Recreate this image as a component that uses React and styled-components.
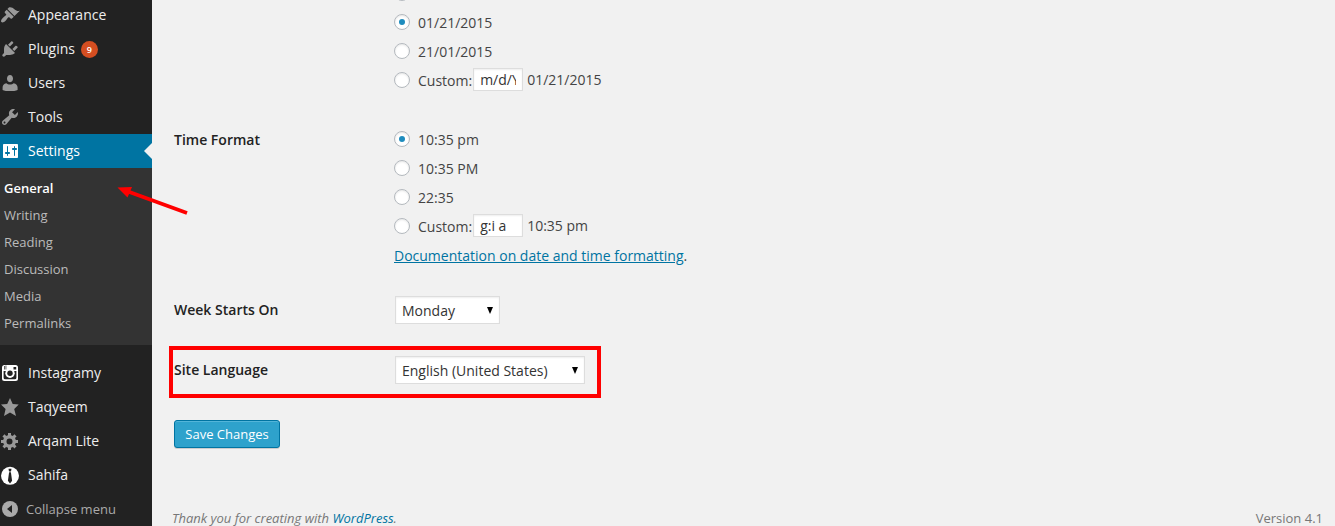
import React from "react";
import styled, { createGlobalStyle, css } from "styled-components";

const GlobalStyle = createGlobalStyle`
  *, *::before, *::after { box-sizing: border-box; }
  html, body { margin: 0; padding: 0; }
  body {
    background: #f1f1f1;
    color: #444;
    font-family: "Open Sans", "Noto Sans", sans-serif;
    font-size: 14px;
    overflow: hidden;
  }
`;

const Page = styled.div`
  position: relative;
  display: flex;
  width: 1335px;
  height: 526px;
  overflow: hidden;
`;

const Sidebar = styled.nav`
  flex: 0 0 152px;
  height: 528px;
  margin-top: -2px;
  background: #222;
`;

const MenuItem = styled.a`
  display: flex;
  align-items: center;
  height: 34px;
  color: ${(p) => (p.$current ? "#fff" : "#eee")};
  background: ${(p) => (p.$current ? "#0074a2" : "transparent")};
  line-height: 18px;
  white-space: nowrap;
  ${(p) =>
    p.$current &&
    css`
      &::after {
        content: "";
        margin-left: auto;
        border: 8px solid transparent;
        border-left-width: 0;
        border-right-color: #f1f1f1;
      }
    `}
`;

const MenuIcon = styled.svg`
  flex: none;
  width: 20px;
  height: 20px;
  margin-right: 8px;
  fill: ${(p) => p.$color || "#999"};
`;

const Badge = styled.span`
  width: 17px;
  height: 17px;
  margin-left: 6px;
  border-radius: 50%;
  background: #d54e21;
  color: #fff;
  font-size: 9px;
  font-weight: 600;
  line-height: 17px;
  text-align: center;
`;

const Submenu = styled.div`
  height: 177px;
  margin-bottom: 11px;
  padding: 7px 4px;
  background: #333;
`;

const SubItem = styled.a`
  display: block;
  height: 27px;
  color: ${(p) => (p.$current ? "#fff" : "#bbb")};
  font-size: 13px;
  font-weight: ${(p) => (p.$current ? 600 : 400)};
  line-height: 27px;
`;

const Collapse = styled(MenuItem)`
  color: #aaa;
  font-size: 13px;
  ${MenuIcon} { margin-right: 6px; }
`;

const Main = styled.main`
  display: flex;
  flex: 1;
  flex-direction: column;
  height: 526px;
`;

const Field = styled.section`
  display: grid;
  grid-template-columns: 220px 1fr;
  height: ${(p) => p.$height}px;
  padding-left: 22px;
  flex: none;
`;

const DateField = styled(Field)`
  margin-top: -21px;
`;

const Heading = styled.h2`
  margin: 0;
  padding-top: ${(p) => p.$top || 0}px;
  color: #222;
  font-size: 14px;
  font-weight: 600;
  line-height: 20px;
`;

const RadioRow = styled.label`
  display: flex;
  height: 29px;
  line-height: 20px;
  padding-top: 5px;
`;

const Radio = styled.span`
  display: flex;
  align-items: center;
  justify-content: center;
  width: 16px;
  height: 16px;
  margin: 1px 8px 0 0;
  border: 1px solid #b4b9be;
  border-radius: 50%;
  background: #fff;
  box-shadow: inset 0 1px 2px rgba(0, 0, 0, 0.1);
  &::before {
    content: "";
    width: 6px;
    height: 6px;
    border-radius: 50%;
    background: ${(p) => (p.$checked ? "#1e8cbe" : "transparent")};
  }
`;

const FormatInput = styled.input`
  width: 50px;
  height: 23px;
  margin: -3px 4px 0 1px;
  padding: 3px 6px;
  border: 1px solid #ddd;
  background: #fff;
  box-shadow: inset 0 1px 2px rgba(0, 0, 0, 0.07);
  color: #333;
  font: 14px "Open Sans", sans-serif;
  outline: none;
`;

const Example = styled.span`
  margin-top: -1px;
`;

const DocLine = styled.p`
  margin: 5px 0 0;
  line-height: 20px;
`;

const Link = styled.a`
  color: #0074a2;
  text-decoration: ${(p) => (p.$underline ? "underline" : "none")};
`;

const SelectBox = styled.div`
  display: flex;
  align-items: center;
  justify-content: space-between;
  width: ${(p) => p.$width}px;
  height: 28px;
  margin-left: 1px;
  padding: 1px 6px 0 6px;
  border: 1px solid #ddd;
  background: #fff;
  box-shadow: inset 0 1px 2px rgba(0, 0, 0, 0.07);
  color: #333;
  svg { width: 6px; height: 7px; margin-top: -1px; }
`;

const SaveButton = styled.button`
  align-self: flex-start;
  flex: none;
  width: 106px;
  height: 28px;
  margin: 4px 0 0 22px;
  padding: 0;
  border: 1px solid #0074a2;
  border-radius: 3px;
  background: #2ea2cc;
  box-shadow: inset 0 1px 0 rgba(120, 200, 230, 0.5), 0 1px 0 rgba(0, 0, 0, 0.15);
  color: #fff;
  font: 13px/26px "Open Sans", sans-serif;
`;

const Footer = styled.footer`
  display: flex;
  justify-content: space-between;
  margin-top: auto;
  padding: 0 12px 0 20px;
  height: 18px;
  color: #777;
  font-size: 13px;
  line-height: 20px;
`;

const Highlight = styled.div`
  position: absolute;
  left: 169px;
  top: 346px;
  width: 432px;
  height: 52px;
  border: 4px solid #f00;
`;

const Arrow = styled.svg`
  position: absolute;
  left: 116px;
  top: 184px;
  width: 74px;
  height: 32px;
`;

const paths = {
  appearance:
    "M14.48 11.06L7.41 3.99l1.5-1.5c.5-.56 2.3-.47 3.51.32 1.21.8 1.43 1.28 2.91 2.1 1.18.64 2.45 1.26 4.45.85zm-.71.71L6.7 4.7 4.93 6.47c-.39.39-.39 1.02 0 1.41l1.06 1.06c.39.39.39 1.03 0 1.42-.6.6-1.43 1.11-2.21 1.69-.35.26-.7.53-1.01.84C1.43 14.23.4 16.08 1.4 17.07c.99 1 2.84-.03 4.18-1.36.31-.31.58-.66.85-1.02.57-.78 1.08-1.61 1.69-2.21.39-.39 1.02-.39 1.41 0l1.06 1.06c.39.39 1.02.39 1.41 0z",
  plugins:
    "M13.11 4.36L9.87 7.6 8 5.73l3.24-3.24c.35-.34 1.05-.2 1.56.32.52.51.66 1.21.31 1.55zm-8 1.77l.91-1.12 9.01 9.01-1.19.84c-.71.71-2.63 1.16-3.82 1.16H6.14L4.9 17.26c-.59.59-1.54.59-2.12 0-.59-.58-.59-1.53 0-2.12l1.24-1.24v-3.88c0-1.13.4-3.19 1.09-3.89zm7.26 3.97l3.24-3.24c.34-.35 1.04-.21 1.55.31.52.51.66 1.21.31 1.55l-3.24 3.25z",
  users:
    "M10 9.300c-2.300 0-3-2.100-3-3.700C7 3.500 8.200 2 10 2s3 1.500 3 3.600c0 1.600-.7 3.700-3 3.700zM6.300 10.200C7.200 11.100 8.600 11.600 10 11.600s2.800-.5 3.700-1.400c2.400.2 3.900 2.200 3.900 4.300v2.400c-1.700.8-4.700 1.200-7.600 1.200s-5.900-.4-7.400-1.200v-2.400c0-2.100 1.300-4.100 3.700-4.300z",
  tools:
    "M16.68 9.77c-1.34 1.34-3.3 1.67-4.95.99l-5.41 6.52c-.99.99-2.59.99-3.58 0s-.99-2.59 0-3.57l6.52-5.42c-.68-1.65-.35-3.61.99-4.95 1.28-1.28 3.12-1.62 4.72-1.06l-2.89 2.89 2.82 2.82 2.86-2.87c.53 1.58.18 3.39-1.08 4.65zM3.81 16.21c.4.39 1.04.39 1.43 0 .4-.4.4-1.04 0-1.43-.39-.4-1.03-.4-1.43 0-.39.39-.39 1.03 0 1.43z",
  settings:
    "M18 16V4c0-.55-.45-1-1-1H4c-.55 0-1 .45-1 1v12c0 .55.45 1 1 1h13c.55 0 1-.45 1-1zM8 11h1c.55 0 1 .45 1 1s-.45 1-1 1H8v1.5c0 .28-.22.5-.5.5s-.5-.22-.5-.5V13H6c-.55 0-1-.45-1-1s.45-1 1-1h1V5.5c0-.28.22-.5.5-.5s.5.22.5.5V11zm6-2h-1c-.55 0-1-.45-1-1s.45-1 1-1h1V5.500c0-.28.22-.5.5-.5s.5.22.5.5V7h1c.55 0 1 .45 1 1s-.45 1-1 1h-1v5.500c0 .28-.22.5-.5.5s-.5-.22-.5-.5V9z",
  star: "M10 1l2.700 6 6 .5-4.500 4.500L16 19l-6-3.500L4 19l1.600-7L1 7.500l6.200-.5z",
};

function Icon({ name, color }) {
  return (
    <MenuIcon viewBox="0 0 20 20" $color={color}>
      <path d={paths[name]} />
    </MenuIcon>
  );
}

function GearIcon() {
  return (
    <MenuIcon viewBox="0 0 20 20">
      <circle cx="9.500" cy="10.400" r="4.700" fill="none" stroke="#999" strokeWidth="3.400" />
      {[0, 45, 90, 135].map((angle) => (
        <g key={angle} transform={`rotate(${angle} 9.5 10.4)`}>
          <path d="M8 1.900h3v3H8zM8 15.900h3v3H8z" />
        </g>
      ))}
    </MenuIcon>
  );
}

function CameraIcon() {
  return (
    <MenuIcon viewBox="0 0 20 20" $color="#fff">
      <rect x="2" y="2" width="16" height="16" rx="2.500" />
      <path d="M3.600 8h12.800v6.700a1.600 1.600 0 0 1-1.600 1.600H5.200a1.600 1.600 0 0 1-1.600-1.600z" fill="#222" />
      <circle cx="10" cy="10.300" r="4.700" />
      <circle cx="10" cy="10.300" r="2.700" fill="#222" />
      <path d="M13.500 4h2.700v2.500h-2.700zM4 3h.7v3.500H4zM5.600 2.500h.7v4h-.7z" fill="#222" />
    </MenuIcon>
  );
}

function TieIcon() {
  return (
    <MenuIcon viewBox="0 0 20 20" $color="#fff">
      <circle cx="10" cy="10.800" r="9" />
      <path d="M8.500 3.800h3l-.5 2.600H9zM9.100 7.200h1.800l1.200 8.500-2.100 2.700-2.100-2.700z" fill="#222" />
    </MenuIcon>
  );
}

function CollapseIcon() {
  return (
    <MenuIcon viewBox="0 0 20 20" $color="#aaa">
      <circle cx="10" cy="10" r="8" />
      <path d="M12 6v8l-5-4z" fill="#222" />
    </MenuIcon>
  );
}

function Option({ checked, children }) {
  return (
    <RadioRow>
      <Radio $checked={checked} />
      {children}
    </RadioRow>
  );
}

function Select({ width, children }) {
  return (
    <SelectBox $width={width}>
      {children}
      <svg viewBox="0 0 6 7">
        <path d="M0 0h6L3 7z" fill="#000" />
      </svg>
    </SelectBox>
  );
}

const subItems = ["Writing", "Reading", "Discussion", "Media", "Permalinks"];

export default function App() {
  return (
    <Page>
      <GlobalStyle />
      <Sidebar>
        <MenuItem><Icon name="appearance" />Appearance</MenuItem>
        <MenuItem><Icon name="plugins" />Plugins<Badge>9</Badge></MenuItem>
        <MenuItem><Icon name="users" />Users</MenuItem>
        <MenuItem><Icon name="tools" />Tools</MenuItem>
        <MenuItem $current><Icon name="settings" color="#fff" />Settings</MenuItem>
        <Submenu>
          <SubItem $current>General</SubItem>
          {subItems.map((label) => (
            <SubItem key={label}>{label}</SubItem>
          ))}
        </Submenu>
        <MenuItem><CameraIcon />Instagramy</MenuItem>
        <MenuItem><Icon name="star" />Taqyeem</MenuItem>
        <MenuItem><GearIcon />Arqam Lite</MenuItem>
        <MenuItem><TieIcon />Sahifa</MenuItem>
        <Collapse><CollapseIcon />Collapse menu</Collapse>
      </Sidebar>
      <Main>
        <DateField $height={146}>
          <span />
          <div>
            <Option />
            <Option checked>01/21/2015</Option>
            <Option>21/01/2015</Option>
            <Option>
              Custom:
              <FormatInput defaultValue="m/d/Y" />
              <Example>01/21/2015</Example>
            </Option>
          </div>
        </DateField>
        <Field $height={171}>
          <Heading $top={5}>Time Format</Heading>
          <div>
            <Option checked>10:35 pm</Option>
            <Option>10:35 PM</Option>
            <Option>22:35</Option>
            <Option>
              Custom:
              <FormatInput defaultValue="g:i a" />
              <Example>10:35 pm</Example>
            </Option>
            <DocLine>
              <Link $underline>Documentation on date and time formatting</Link>.
            </DocLine>
          </div>
        </Field>
        <Field $height={60}>
          <Heading $top={4}>Week Starts On</Heading>
          <Select width={105}>Monday</Select>
        </Field>
        <Field $height={60}>
          <Heading $top={4}>Site Language</Heading>
          <Select width={190}>English (United States)</Select>
        </Field>
        <SaveButton>Save Changes</SaveButton>
        <Footer>
          <em>
            Thank you for creating with <Link>WordPress</Link>.
          </em>
          <span>Version 4.1</span>
        </Footer>
      </Main>
      <Highlight />
      <Arrow viewBox="0 0 74 32">
        <path d="M71 29L12 7.500" stroke="#f00" strokeWidth="3.800" />
        <path d="M1.500 3.500L16 3L11.500 13.500z" fill="#f00" />
      </Arrow>
    </Page>
  );
}
